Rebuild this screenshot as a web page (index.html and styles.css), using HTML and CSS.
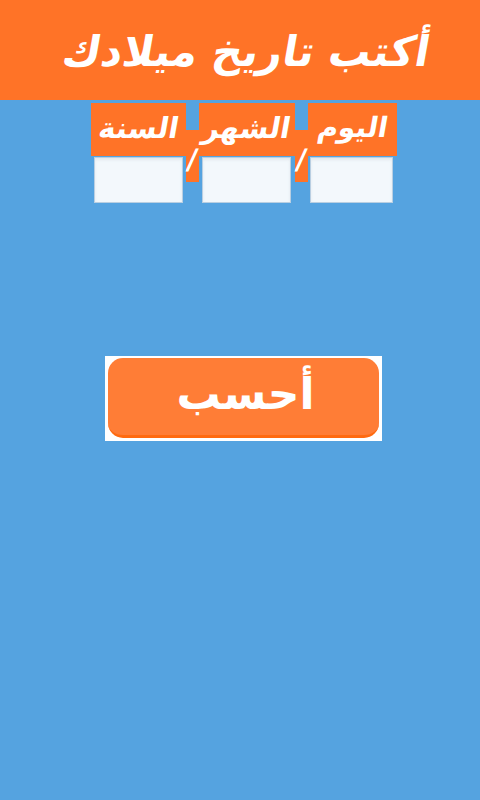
FILE: index.html
```html
<!DOCTYPE html>
<html lang="ar" dir="rtl">
<head>
    <meta charset="UTF-8">
    <meta name="viewport" content="width=device-width, initial-scale=1.0">
    <title>تاريخ الميلاد</title>
    <link rel="stylesheet" href="styles.css">
</head>
<body>
    <div class="header">
        <h1 class="title">أكتب تاريخ ميلادك</h1>
    </div>
    <div class="date-row">
        <div class="field field-day">
            <label class="field-label" for="day"><span class="label-text">اليوم</span></label>
            <input class="field-input" type="text" id="day">
        </div>
        <div class="sep"><span class="sep-mark">/</span></div>
        <div class="field field-month">
            <label class="field-label" for="month"><span class="label-text">الشهر</span></label>
            <input class="field-input" type="text" id="month">
        </div>
        <div class="sep"><span class="sep-mark">/</span></div>
        <div class="field field-year">
            <label class="field-label" for="year"><span class="label-text">السنة</span></label>
            <input class="field-input" type="text" id="year">
        </div>
    </div>
    <div class="actions">
        <div class="calc-frame">
            <button class="calc-btn" type="button">أحسب</button>
        </div>
    </div>
</body>
</html>
```

FILE: styles.css
```css
body {
    margin: 0;
    height: 800px;
    overflow: hidden;
    background: #55a3e0;
    font-family: "DejaVu Sans", "Liberation Sans", sans-serif;
    color: #fff;
}
.header {
    height: 100px;
    background: #ff7327;
    display: flex;
    align-items: center;
    justify-content: center;
    padding-left: 12px;
    box-sizing: border-box;
}
.title {
    margin: 4px 0 0;
    font-size: 42px;
    font-weight: bold;
    line-height: 1;
    transform: skewX(-10deg);
}
.date-row {
    display: flex;
    width: 306px;
    margin: 3px 83px 0 91px;
}
.field {
    display: flex;
    flex-direction: column;
    align-items: center;
}
.field-day {
    width: 89px;
}
.field-month {
    width: 96px;
}
.field-year {
    width: 95px;
}
.field-label {
    align-self: stretch;
    height: 53px;
    background: #ff7327;
    font-size: 29px;
    font-weight: bold;
    line-height: 50px;
    text-align: center;
}
.field-day .field-label {
    font-size: 28px;
}
.label-text {
    display: inline-block;
    transform: skewX(-10deg);
}
.field-input {
    box-sizing: border-box;
    height: 46px;
    margin-top: 1px;
    padding: 0;
    border: 1px solid #b9cfe2;
    background: #f3f8fc;
    box-shadow: inset 0 2px 3px #e3e9ee;
}
.field-day .field-input {
    width: 83px;
    margin-right: 2px;
}
.field-month .field-input {
    width: 89px;
    margin-right: 1px;
}
.field-year .field-input {
    width: 89px;
}
.sep {
    width: 13px;
    height: 52px;
    margin-top: 27px;
    background: #ff7327;
    font-size: 28px;
    line-height: 60px;
    text-align: center;
}
.sep-mark {
    display: inline-block;
    transform: skewX(-8deg);
    font-weight: bold;
}
.actions {
    display: flex;
    margin-top: 153px;
    padding-right: 98px;
}
.calc-frame {
    width: 277px;
    height: 85px;
    box-sizing: border-box;
    padding: 2px 3px 3px;
    background: #fff;
}
.calc-btn {
    display: block;
    width: 100%;
    height: 100%;
    padding: 0 0 6px 4px;
    border: none;
    border-bottom: 3px solid #ff6a10;
    border-radius: 15px;
    background: #ff7d36;
    color: #fff;
    font-family: inherit;
    font-size: 44px;
    font-weight: bold;
    line-height: 1;
}
```
